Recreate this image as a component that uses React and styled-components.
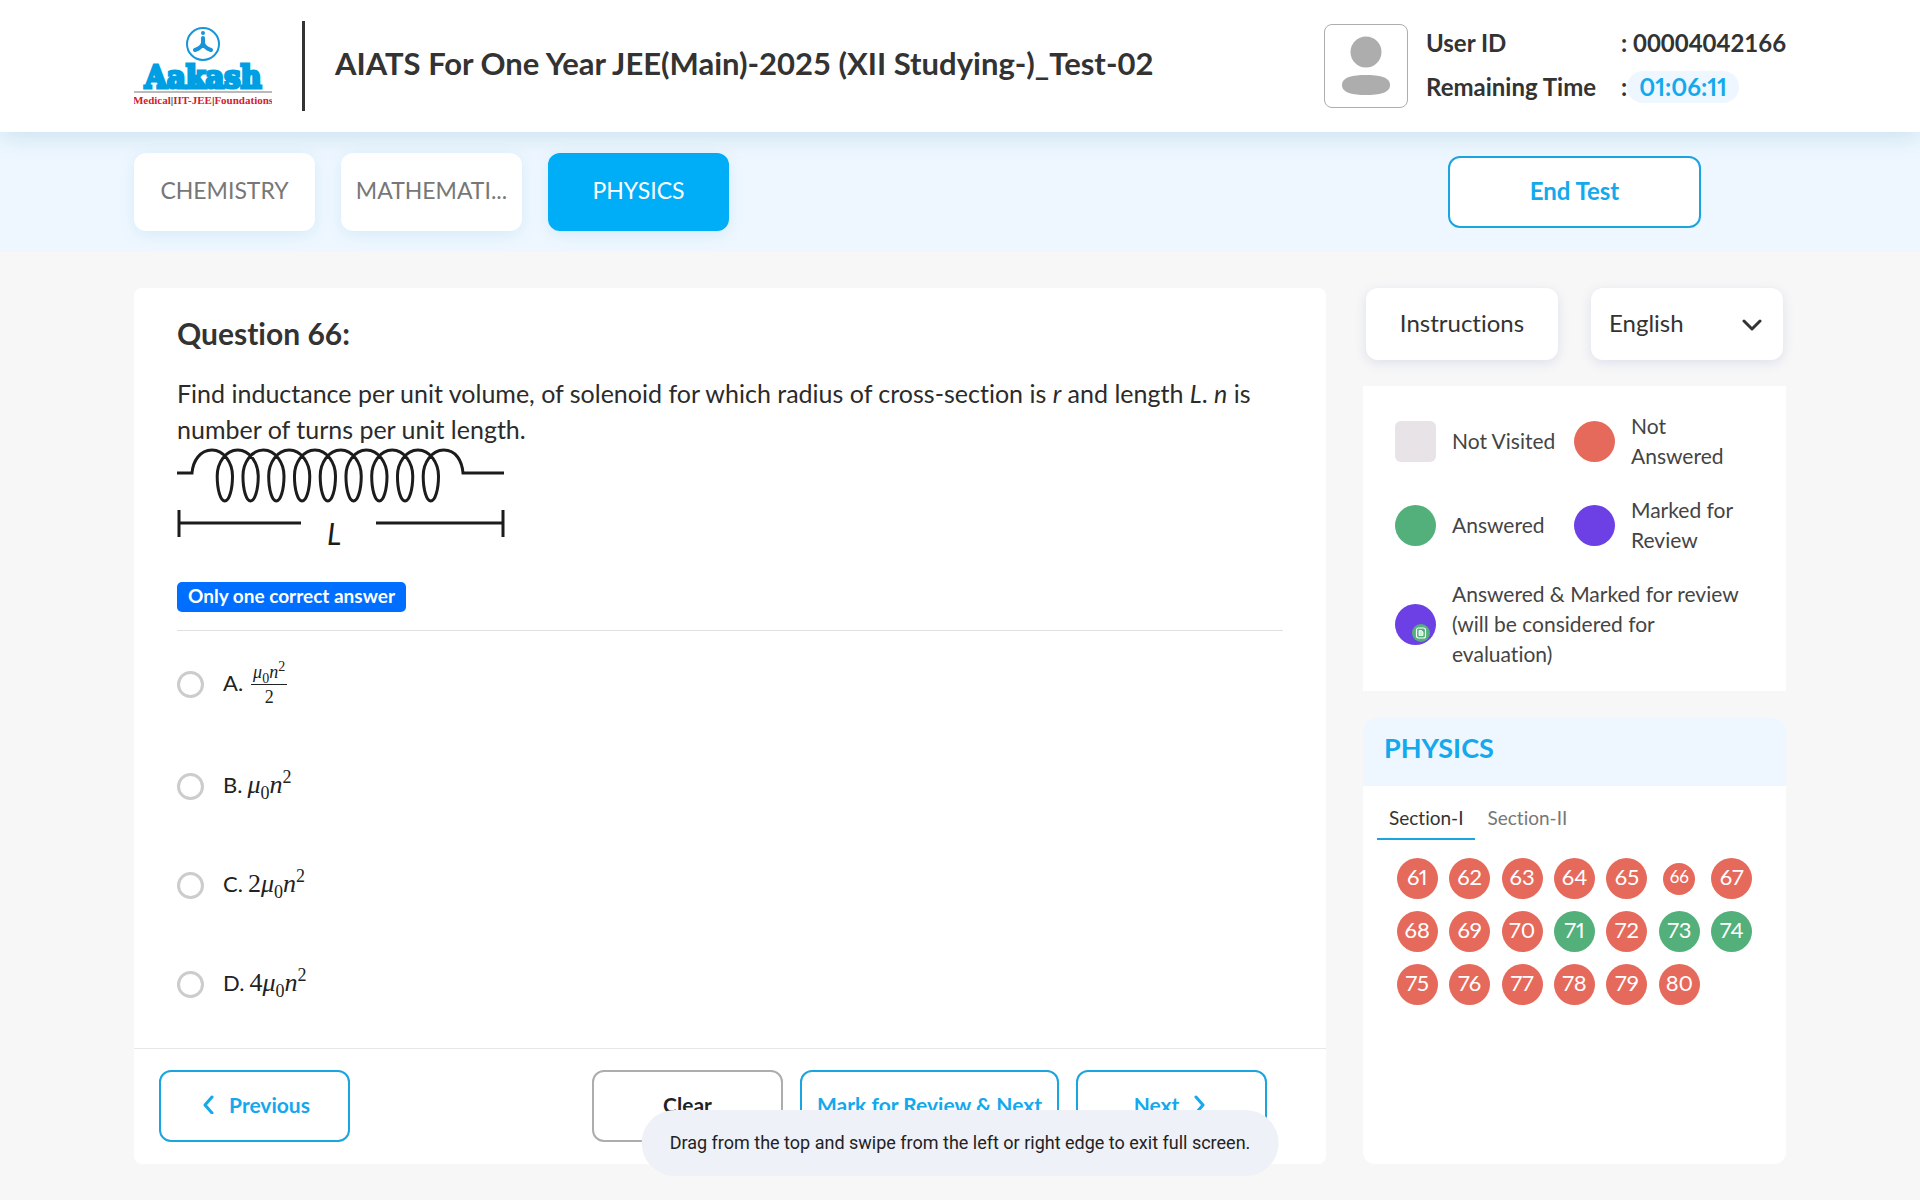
import React, { useState } from "react";
import styled, { createGlobalStyle } from "styled-components";

const subjects = ["CHEMISTRY", "MATHEMATI...", "PHYSICS"];

const options = [
  { id: "A", coef: "", fraction: true },
  { id: "B", coef: "" },
  { id: "C", coef: "2" },
  { id: "D", coef: "4" },
];

const answered = [71, 73, 74];
const numbers = Array.from({ length: 20 }, (_, i) => 61 + i);

const Logo = () => (
  <LogoSvg viewBox="0 0 138 84" role="img" aria-label="Aakash">
    <circle cx="69" cy="20" r="16" fill="#fff" stroke="#1696d8" strokeWidth="2" />
    <circle cx="69" cy="9" r="2" fill="#1696d8" />
    <path
      d="M69 14V20M69 19C68 23 64 25 61 26M69 19C70 23 74 25 77 26"
      fill="none"
      stroke="#1696d8"
      strokeWidth="4"
      strokeLinecap="round"
    />
    <text x="69" y="64" textAnchor="middle" className="name">
      Aakash
    </text>
    <path d="M0 68H138" stroke="#777" strokeWidth="1" />
    <text x="69" y="80" textAnchor="middle" className="tag">
      Medical<tspan fill="#222">|</tspan>IIT-JEE<tspan fill="#222">|</tspan>Foundations
    </text>
  </LogoSvg>
);

const turns = Array.from({ length: 9 }, (_, i) => 35 + i * 25.75);
const coil =
  "M0 26H15C16 14 23 3 35 3" +
  turns
    .map(
      (t) =>
        `C${t + 12} 3 ${t + 20.5} 16 ${t + 20.5} 29` +
        `C${t + 20.5} 43 ${t + 17} 54 ${t + 12.8} 54` +
        `C${t + 8.6} 54 ${t + 5.2} 43 ${t + 5.2} 29` +
        `C${t + 5.2} 16 ${t + 13.5} 3 ${t + 25.75} 3`
    )
    .join("") +
  "C279 3 285 14 286 26H327";

const Solenoid = () => (
  <SolenoidSvg viewBox="0 0 328 112" role="img" aria-label="Solenoid of length L">
    <path d={coil} />
    <path d="M2 63V90M326 63V90M2 76H124M199 76H326" />
    <text x="150" y="98">
      L
    </text>
  </SolenoidSvg>
);

const Chevron = ({ d }) => (
  <svg
    width="20"
    height="20"
    viewBox="0 0 20 20"
    fill="none"
    stroke="currentColor"
    strokeWidth="3"
    strokeLinecap="round"
    strokeLinejoin="round"
    aria-hidden="true"
  >
    <path d={d} />
  </svg>
);

const Term = ({ coef }) => (
  <>
    {coef}
    <i>μ</i>
    <sub>0</sub>
    <i>n</i>
    <sup>2</sup>
  </>
);

const App = () => {
  const [subject, setSubject] = useState("PHYSICS");
  const [choice, setChoice] = useState("");

  return (
    <Page>
      <GlobalStyle />
      <Header>
        <Logo />
        <Divider />
        <Title>AIATS For One Year JEE(Main)-2025 (XII Studying-)_Test-02</Title>
        <Avatar>
          <svg width="48" height="60" viewBox="0 0 48 60" fill="#adadad" aria-hidden="true">
            <circle cx="24" cy="16" r="15.5" />
            <path d="M0 49C0 41 11 39 24 39S48 41 48 49S37 59 24 59S0 57 0 49Z" />
          </svg>
        </Avatar>
        <UserInfo>
          <dt>User ID</dt>
          <dd>: 00004042166</dd>
          <dt>Remaining Time</dt>
          <dd>
            :<Timer>01:06:11</Timer>
          </dd>
        </UserInfo>
      </Header>

      <SubjectBar>
        {subjects.map((name) => (
          <SubjectTab key={name} $active={name === subject} onClick={() => setSubject(name)}>
            {name}
          </SubjectTab>
        ))}
        <EndTest>End Test</EndTest>
      </SubjectBar>

      <Main>
        <Question>
          <QuestionBody>
            <h2>Question 66:</h2>
            <p>
              Find inductance per unit volume, of solenoid for which radius of cross-section is{" "}
              <i>r</i> and length <i>L</i>. <i>n</i> is number of turns per unit length.
            </p>
            <Solenoid />
            <Badge>Only one correct answer</Badge>
            <Options>
              {options.map(({ id, coef, fraction }) => (
                <Option key={id}>
                  <input
                    type="radio"
                    name="answer"
                    value={id}
                    checked={choice === id}
                    onChange={() => setChoice(id)}
                  />
                  <OptionText>
                    <span>{id}.</span>
                    {fraction ? (
                      <Fraction>
                        <span>
                          <Term coef={coef} />
                        </span>
                        <span>2</span>
                      </Fraction>
                    ) : (
                      <Formula>
                        <Term coef={coef} />
                      </Formula>
                    )}
                  </OptionText>
                </Option>
              ))}
            </Options>
          </QuestionBody>
          <Actions>
            <ActionButton>
              <Chevron d="M13 3L6 11L13 19" />
              Previous
            </ActionButton>
            <Spacer />
            <ActionButton $muted>Clear</ActionButton>
            <ActionButton $wide>Mark for Review &amp; Next</ActionButton>
            <ActionButton>
              Next
              <Chevron d="M7 3L14 11L7 19" />
            </ActionButton>
          </Actions>
        </Question>

        <Side>
          <TopControls>
            <Instructions>Instructions</Instructions>
            <Language>
              <select aria-label="Language" defaultValue="English">
                <option>English</option>
                <option>Hindi</option>
              </select>
              <Chevron d="M2 7L10 15L18 7" />
            </Language>
          </TopControls>

          <Legend>
            <LegendItem>
              <Swatch $color="#e7e3e7" $square />
              Not Visited
            </LegendItem>
            <LegendItem>
              <Swatch $color="#e66a5b" />
              Not Answered
            </LegendItem>
            <LegendItem>
              <Swatch $color="#53b07b" />
              Answered
            </LegendItem>
            <LegendItem>
              <Swatch $color="#6c40e4" />
              Marked for Review
            </LegendItem>
            <LegendItem $full>
              <Swatch $color="#6c40e4">
                <svg viewBox="0 0 18 18" aria-hidden="true">
                  <circle cx="9" cy="9" r="9" fill="#53b07b" />
                  <rect x="4.5" y="4" width="9" height="10" rx="2" fill="none" stroke="#fff" strokeWidth="1.2" />
                  <path d="M7 6.5H9.5L11 8V11.5H7Z" fill="#c9efd8" stroke="#fff" strokeWidth=".8" />
                </svg>
              </Swatch>
              Answered &amp; Marked for review (will be considered for evaluation)
            </LegendItem>
          </Legend>

          <Palette>
            <h3>PHYSICS</h3>
            <Sections>
              <SectionTab $active>Section-I</SectionTab>
              <SectionTab>Section-II</SectionTab>
            </Sections>
            <NumberGrid>
              {numbers.map((n) => (
                <NumberButton key={n} $done={answered.includes(n)} $current={n === 66}>
                  {n}
                </NumberButton>
              ))}
            </NumberGrid>
          </Palette>
        </Side>
      </Main>

      <Toast role="status">
        Drag from the top and swipe from the left or right edge to exit full screen.
      </Toast>
    </Page>
  );
};

export default App;

const GlobalStyle = createGlobalStyle`
  * {
    box-sizing: border-box;
  }
  body {
    margin: 0;
    background: #f7f7f7;
    color: #333;
    font-family: Lato, "Liberation Sans", sans-serif;
    font-size: 24px;
    font-variant-ligatures: none;
  }
  button, select {
    font: inherit;
    font-variant-ligatures: none;
    color: inherit;
    cursor: pointer;
  }
  h1, h2, h3, p, dl, dd {
    margin: 0;
  }
`;

const Page = styled.div`
  display: flex;
  flex-direction: column;
  min-height: 100vh;
`;

const Header = styled.header`
  display: flex;
  align-items: center;
  z-index: 1;
  min-height: 132px;
  padding: 0 134px;
  background: #fff;
  box-shadow: 0 4px 24px rgba(0, 110, 150, 0.16);
`;

const LogoSvg = styled.svg`
  width: 138px;
  height: 84px;
  margin-right: 30px;

  .name {
    fill: #009fe3;
    stroke: #009fe3;
    stroke-width: 3px;
    font-family: "DejaVu Serif Condensed", "DejaVu Serif", serif;
    font-size: 32px;
    font-weight: 700;
  }
  .tag {
    fill: #d5202f;
    font-family: "Liberation Serif", serif;
    font-size: 11px;
    font-weight: 700;
  }
`;

const Divider = styled.div`
  width: 3px;
  height: 90px;
  margin-right: 30px;
  background: #333;
`;

const Title = styled.h1`
  flex: 1;
  padding-bottom: 6px;
  color: #333;
  font-size: 31px;
  font-weight: 700;
`;

const Avatar = styled.div`
  display: flex;
  align-items: center;
  justify-content: center;
  width: 84px;
  height: 84px;
  margin-right: 18px;
  border: 1px solid #adadad;
  border-radius: 8px;
`;

const UserInfo = styled.dl`
  display: grid;
  grid-template-columns: 195px 165px;
  align-items: center;
  row-gap: 12px;
  padding-bottom: 2px;
  font-weight: 700;
  line-height: 32px;
  white-space: nowrap;

  dd {
    display: flex;
  }
`;

const Timer = styled.span`
  padding: 0 12px;
  border-radius: 16px;
  background: #eef7ff;
  color: #14a8ec;
  font-variant-numeric: proportional-nums;
`;

const SubjectBar = styled.nav`
  display: flex;
  align-items: center;
  gap: 26px;
  min-height: 120px;
  padding: 0 219px 0 134px;
  background: #eef7ff;
`;

const SubjectTab = styled.button`
  width: 181px;
  height: 78px;
  padding: 0 12px 4px;
  border: 0;
  border-radius: 12px;
  background: ${({ $active }) => ($active ? "#00adf7" : "#fff")};
  color: ${({ $active }) => ($active ? "#fff" : "#777")};
  box-shadow: 0 4px 16px rgba(0, 140, 190, 0.1);
  font-size: 23px;
`;

const EndTest = styled.button`
  width: 253px;
  height: 72px;
  margin-left: auto;
  padding: 0 0 4px;
  border: 2px solid #1ba5e0;
  border-radius: 12px;
  background: #fff;
  color: #14a8ec;
  font-weight: 700;
`;

const Main = styled.main`
  display: grid;
  flex: 1;
  grid-template-columns: minmax(0, 1fr) 423px;
  gap: 37px;
  padding: 36px 134px;
`;

const Question = styled.section`
  display: flex;
  flex-direction: column;
  border-radius: 8px;
  background: #fff;
`;

const QuestionBody = styled.div`
  flex: 1;
  padding: 27px 43px 0;

  h2 {
    margin-bottom: 24px;
    font-size: 30px;
    line-height: 36px;
  }
  p {
    color: #2b2b2b;
    font-size: 25px;
    line-height: 36px;
  }
`;

const SolenoidSvg = styled.svg`
  display: block;
  width: 328px;
  height: 112px;

  path {
    fill: none;
    stroke: #1c1c1c;
    stroke-width: 3px;
  }
  text {
    fill: #1c1c1c;
    font-size: 30px;
    font-style: italic;
  }
`;

const Badge = styled.div`
  width: fit-content;
  margin-top: 23px;
  padding: 0 11px 2px;
  border-radius: 5px;
  background: #006eff;
  color: #fff;
  font-size: 19px;
  font-weight: 700;
  line-height: 28px;
`;

const Options = styled.div`
  display: grid;
  grid-template-rows: 106px;
  grid-auto-rows: 99px;
  margin-top: 18px;
  border-top: 1px solid #e0e0e0;
`;

const Option = styled.label`
  display: flex;
  align-items: center;
  gap: 19px;

  input {
    appearance: none;
    width: 27px;
    height: 27px;
    margin: 0;
    border: 3px solid #ccc;
    border-radius: 50%;
  }
  input:checked {
    border: 9px solid #00adf7;
  }
`;

const OptionText = styled.span`
  display: flex;
  align-items: center;
  gap: 5px;
  padding-bottom: 4px;
  color: #222;
  font-size: 22px;
`;

const Formula = styled.span`
  font-family: "Liberation Serif", serif;
  font-size: 26px;
  line-height: 26px;

  sub,
  sup {
    font-size: 18px;
    line-height: 0;
  }
`;

const Fraction = styled.span`
  display: inline-flex;
  flex-direction: column;
  align-items: center;
  padding: 4px 3px 0;
  font-family: "Liberation Serif", serif;
  font-size: 18px;
  line-height: 24px;

  span:first-child {
    padding: 0 2px;
    border-bottom: 1px solid #222;
  }
  sub,
  sup {
    font-size: 14px;
    line-height: 0;
  }
`;

const Actions = styled.div`
  display: flex;
  gap: 17px;
  padding: 21px 59px 22px 25px;
  border-top: 1px solid #e8e8e8;
`;

const Spacer = styled.div`
  flex: 1;
`;

const ActionButton = styled.button`
  display: flex;
  align-items: center;
  justify-content: center;
  gap: 10px;
  width: ${({ $wide }) => ($wide ? "259px" : "191px")};
  height: 72px;
  padding: 0 0 4px;
  border: 2px solid ${({ $muted }) => ($muted ? "#adadad" : "#1ba5e0")};
  border-radius: 12px;
  background: #fff;
  color: ${({ $muted }) => ($muted ? "#222" : "#14a8ec")};
  font-size: 21px;
  font-weight: 700;
  white-space: nowrap;
`;

const Side = styled.aside`
  display: flex;
  flex-direction: column;
`;

const TopControls = styled.div`
  display: flex;
  justify-content: space-between;
  padding: 0 3px;
`;

const Instructions = styled.button`
  width: 192px;
  height: 72px;
  padding: 0 0 4px;
  border: 0;
  border-radius: 12px;
  background: #fff;
  box-shadow: 0 3px 12px rgba(60, 90, 160, 0.14);
`;

const Language = styled.div`
  display: grid;
  align-items: center;
  width: 192px;
  height: 72px;
  border-radius: 12px;
  background: #fff;
  box-shadow: 0 3px 12px rgba(60, 90, 160, 0.14);

  select,
  svg {
    grid-area: 1 / 1;
  }
  select {
    appearance: none;
    height: 100%;
    padding: 0 18px 4px;
    border: 0;
    background: transparent;
  }
  svg {
    justify-self: end;
    margin-right: 21px;
    pointer-events: none;
  }
`;

const Legend = styled.div`
  display: grid;
  grid-template-columns: 163px 180px;
  gap: 24px 16px;
  margin: 26px 0 27px;
  padding: 25px 32px 22px;
  background: #fff;
  color: #444;
  font-size: 21px;
  line-height: 30px;
`;

const LegendItem = styled.div`
  display: flex;
  align-items: center;
  gap: 16px;
  grid-column: ${({ $full }) => ($full ? "1 / -1" : "auto")};
`;

const Swatch = styled.span`
  display: flex;
  align-items: flex-end;
  justify-content: flex-end;
  flex: none;
  width: 41px;
  height: 41px;
  padding: 0 6px 3px 0;
  border-radius: ${({ $square }) => ($square ? "6px" : "50%")};
  background: ${({ $color }) => $color};

  svg {
    width: 18px;
    height: 18px;
  }
`;

const Palette = styled.section`
  flex: 1;
  border-radius: 12px;
  background: #fff;

  h3 {
    padding: 12px 21px 20px;
    border-radius: 12px 12px 0 0;
    background: #eef7ff;
    color: #14a8ec;
    font-size: 27px;
    line-height: 36px;
  }
`;

const Sections = styled.div`
  display: flex;
  padding: 12px 14px 0;
`;

const SectionTab = styled.button`
  height: 42px;
  padding: 0 12px 2px;
  border: 0;
  border-bottom: 2px solid ${({ $active }) => ($active ? "#1ba5e0" : "transparent")};
  background: transparent;
  color: ${({ $active }) => ($active ? "#333" : "#777")};
  font-size: 19px;
`;

const NumberGrid = styled.div`
  display: grid;
  grid-template-columns: repeat(7, 1fr);
  grid-auto-rows: 41px;
  place-items: center;
  row-gap: 12px;
  padding: 18px 28px;
`;

const NumberButton = styled.button`
  width: ${({ $current }) => ($current ? "32px" : "41px")};
  height: ${({ $current }) => ($current ? "32px" : "41px")};
  padding: 0 0 4px;
  border: 0;
  border-radius: 50%;
  background: ${({ $done }) => ($done ? "#53b07b" : "#e66a5b")};
  color: #fff;
  font-size: ${({ $current }) => ($current ? "17px" : "22px")};
  font-variant-numeric: proportional-nums;
`;

const Toast = styled.div`
  position: fixed;
  bottom: 24px;
  left: 50%;
  z-index: 2;
  padding: 0 28px;
  border-radius: 33px;
  background: #eef1f7;
  color: #222;
  font-family: Roboto, sans-serif;
  font-size: 18px;
  line-height: 66px;
  white-space: nowrap;
  transform: translateX(-50%);
`;
